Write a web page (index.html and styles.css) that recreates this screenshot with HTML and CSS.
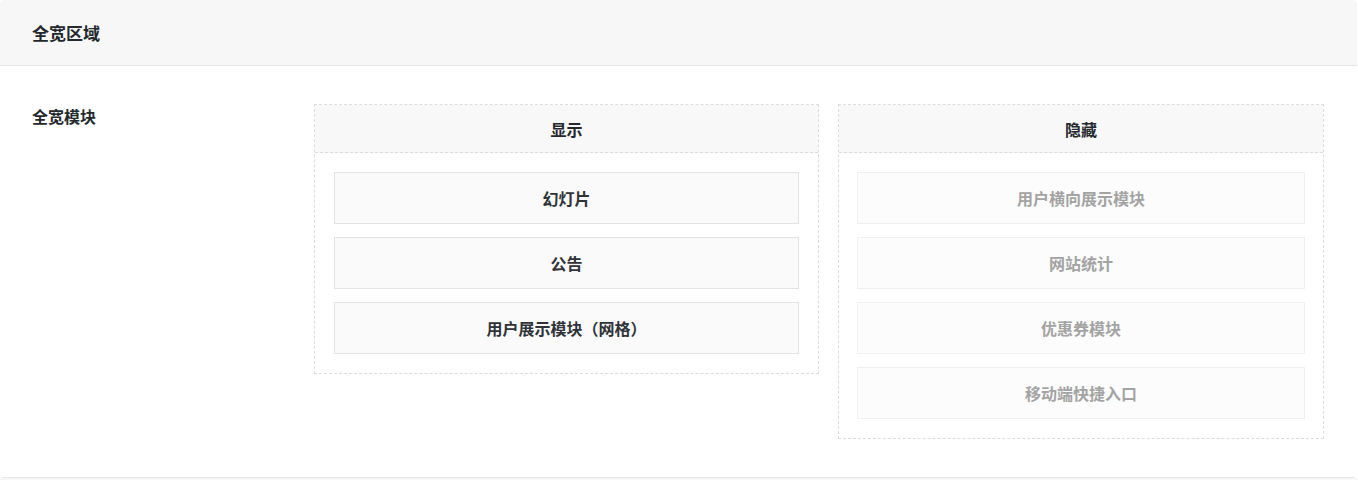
FILE: index.html
```html
<!DOCTYPE html>
<html lang="zh-CN">
<head>
<meta charset="utf-8">
<title>全宽区域</title>
<link rel="stylesheet" href="styles.css">
</head>
<body>
<div class="card">
  <div class="card-head">全宽区域</div>
  <div class="card-body">
    <div class="row">
      <div class="row-label">全宽模块</div>
      <div class="columns">
        <div class="col col-show">
          <div class="col-head">显示</div>
          <div class="col-list">
            <div class="item">幻灯片</div>
            <div class="item">公告</div>
            <div class="item">用户展示模块（网格）</div>
          </div>
        </div>
        <div class="col col-hide">
          <div class="col-head">隐藏</div>
          <div class="col-list">
            <div class="item item-off">用户横向展示模块</div>
            <div class="item item-off">网站统计</div>
            <div class="item item-off">优惠券模块</div>
            <div class="item item-off">移动端快捷入口</div>
          </div>
        </div>
      </div>
    </div>
  </div>
</div>
<div class="card card-next">
  <div class="card-head"></div>
</div>
</body>
</html>
```

FILE: styles.css
```css
* { box-sizing: border-box; }
html, body { margin: 0; padding: 0; background: #fff; }
body {
  font-family: "Noto Sans CJK SC", "Noto Sans", sans-serif;
  color: #23282d;
  width: 1357px;
}
.card {
  background: #fff;
  border-radius: 4px;
  overflow: hidden;
}
.card-head {
  height: 66px;
  background: #f7f7f7;
  border-bottom: 1px solid #e6e6e6;
  padding: 0 32px;
  display: flex;
  align-items: center;
  font-size: 17px;
  font-weight: 700;
  padding-bottom: 1px;
}
.card-body {
  padding: 38px 32px 20px 32px;
}
.row {
  display: flex;
  align-items: flex-start;
}
.row-label {
  width: 282px;
  flex: none;
  font-size: 16px;
  font-weight: 700;
  line-height: 24px;
}
.columns {
  display: grid;
  grid-template-columns: 505px 486px;
  column-gap: 19px;
  align-items: start;
}
.col {
  border: 1px dashed #dcdcdc;
}
.col-head {
  height: 48px;
  background: #f8f8f8;
  border-bottom: 1px dashed #dcdcdc;
  display: flex;
  align-items: center;
  justify-content: center;
  font-size: 16px;
  font-weight: 700;
}
.col-list {
  padding: 19px;
  display: flex;
  flex-direction: column;
  gap: 13px;
}
.col-hide .col-list {
  padding-left: 18px;
  padding-right: 18px;
}
.item {
  height: 52px;
  border: 1px solid #e3e3e3;
  background: #fafafa;
  display: flex;
  align-items: center;
  justify-content: center;
  font-size: 16px;
  font-weight: 700;
  color: #2f3338;
}
.item-off {
  border-color: #f0f0f0;
  background: #fcfcfc;
  color: #a3a3a3;
}
.card-next {
  margin-top: 18px;
  border-top: 1px solid #e6e6e6;
}
```
